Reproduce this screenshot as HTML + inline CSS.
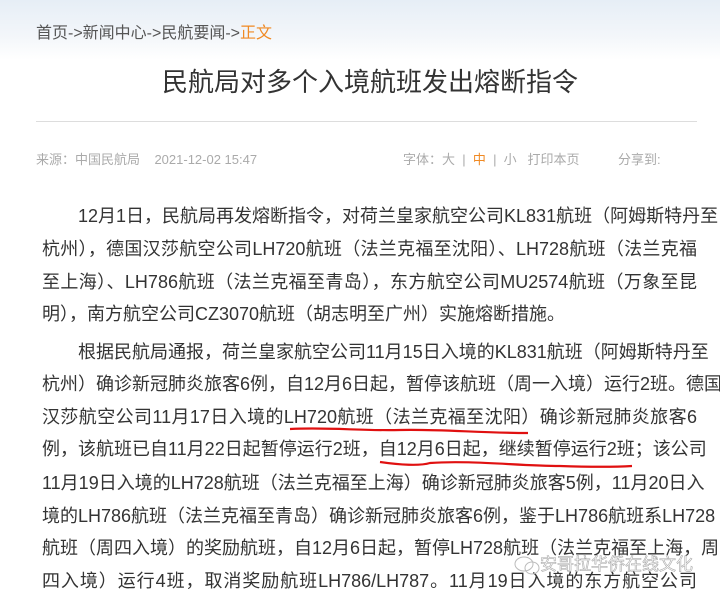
<!DOCTYPE html>
<html><head><meta charset="utf-8"><style>
html,body{margin:0;padding:0}
body{width:720px;height:596px;overflow:hidden;position:relative;background:#fff;font-family:"Liberation Sans","Noto Sans CJK SC",sans-serif}
.top{position:absolute;left:0;top:0;width:720px;height:60px;background:linear-gradient(180deg,#e6eef6 0%,#f3f6fa 60%,#fff 100%)}
.bc{position:absolute;left:36px;top:19px;font-size:16px;color:#555;white-space:nowrap}
.bc span{color:#f08a24}
.title{position:absolute;left:0;width:740px;top:62px;text-align:center;font-size:26px;color:#333;white-space:nowrap}
.hr{position:absolute;left:36px;top:121px;width:661px;height:1px;background:#ddd}
.meta{position:absolute;top:149px;font-size:13px;color:#aaa;white-space:nowrap}
.l{position:absolute;left:42px;width:655px;font-size:18px;color:#333;white-space:nowrap;text-align:justify;text-align-last:justify;line-height:20px}
.l.n{text-align-last:left}
</style></head><body>
<div class="top"></div>
<div class="bc">首页-&gt;新闻中心-&gt;民航要闻-&gt;<span>正文</span></div>
<div class="title">民航局对多个入境航班发出熔断指令</div>
<div class="hr"></div>
<div class="meta" style="left:36px">来源：中国民航局&nbsp;&nbsp;&nbsp;&nbsp;2021-12-02 15:47</div>
<div class="meta" style="left:403px">字体：大 &nbsp;| &nbsp;<span style="color:#f08a24">中</span> &nbsp;| &nbsp;小&nbsp;&nbsp;&nbsp;打印本页</div>
<div class="meta" style="left:618px">分享到:</div>

<div class="l" style="top:206px;left:78px;width:619px">12月1日，民航局再发熔断指令，对荷兰皇家航空公司KL831航班（阿姆斯特丹至</div>
<div class="l" style="top:239px">杭州），德国汉莎航空公司LH720航班（法兰克福至沈阳）、LH728航班（法兰克福</div>
<div class="l" style="top:272px">至上海）、LH786航班（法兰克福至青岛），东方航空公司MU2574航班（万象至昆</div>
<div class="l n" style="top:304px">明），南方航空公司CZ3070航班（胡志明至广州）实施熔断措施。</div>

<div class="l" style="top:342px;left:78px;width:619px">根据民航局通报，荷兰皇家航空公司11月15日入境的KL831航班（阿姆斯特丹至</div>
<div class="l" style="top:374px">杭州）确诊新冠肺炎旅客6例，自12月6日起，暂停该航班（周一入境）运行2班。德国</div>
<div class="l" style="top:407px">汉莎航空公司11月17日入境的LH720航班（法兰克福至沈阳）确诊新冠肺炎旅客6</div>
<div class="l" style="top:439px">例，该航班已自11月22日起暂停运行2班，自12月6日起，继续暂停运行2班；该公司</div>
<div class="l" style="top:473px">11月19日入境的LH728航班（法兰克福至上海）确诊新冠肺炎旅客5例，11月20日入</div>
<div class="l" style="top:506px">境的LH786航班（法兰克福至青岛）确诊新冠肺炎旅客6例，鉴于LH786航班系LH728</div>
<div class="l" style="top:538px">航班（周四入境）的奖励航班，自12月6日起，暂停LH728航班（法兰克福至上海，周</div>
<div class="l" style="top:571px">四入境）运行4班，取消奖励航班LH786/LH787。11月19日入境的东方航空公司</div>

<svg style="position:absolute;left:0;top:0" width="720" height="596">
<path d="M290 429 C330 427 360 431 400 430 C440 429 480 433 528 433" stroke="#e01010" stroke-width="2.2" fill="none"/>
<path d="M380 462 C400 465 420 466 430 463 C470 460 520 466 560 466 C590 467 615 467 632 466" stroke="#e01010" stroke-width="2.2" fill="none"/>
<g stroke="#bbb" fill="none" stroke-width="1"><ellipse cx="524" cy="564" rx="9" ry="7"/><ellipse cx="532" cy="568" rx="7" ry="6"/></g>
<text x="540" y="570" font-size="17" fill="#ffffff" stroke="#aaa" stroke-width="0.6" font-family="Liberation Sans, Noto Sans CJK SC, sans-serif">安哥拉华侨在线文化</text>
</svg>
</body></html>
